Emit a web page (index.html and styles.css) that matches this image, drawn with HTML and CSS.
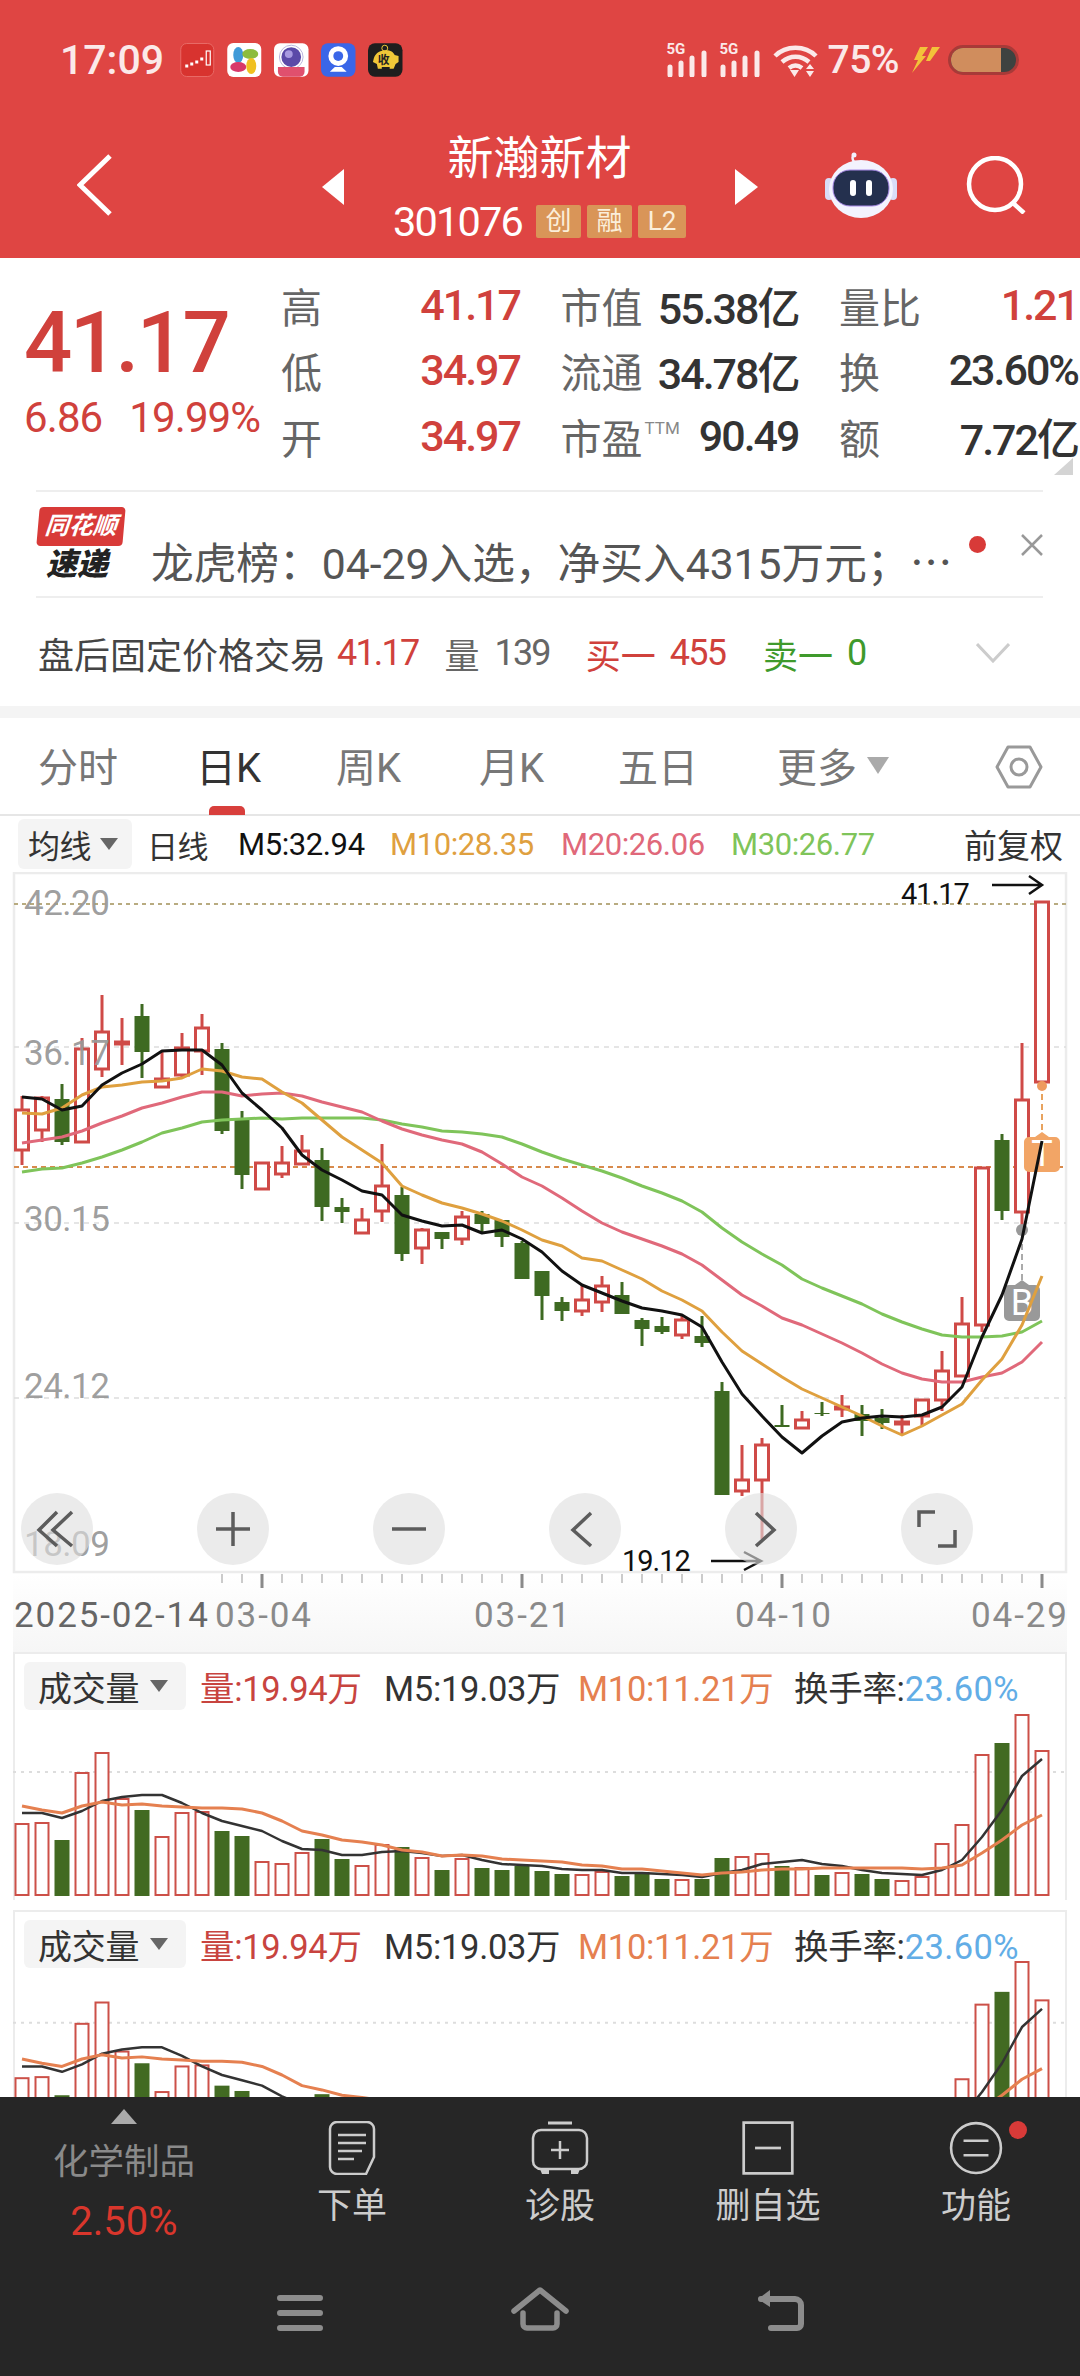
FILE: index.html
```html
<!DOCTYPE html>
<html>
	<head>
		<meta charset="utf-8">
		<title>新瀚新材</title>
		<link rel="stylesheet" href="styles.css">
	</head>
	<body>
		<div class="page">
			<div class="header">
				<div class="status">
					<span class="time">17:09</span>
					<div class="apps">
						<svg viewBox="0 0 34 34"><rect x=".5" y=".5" width="33" height="33" rx="6" fill="#d8332f" stroke="#e86a66"/><path d="M5 23h3M10 21h3M15 19h3M20 16h3" stroke="#fff" stroke-width="3"/><rect x="26" y="8" width="4" height="14" fill="none" stroke="#fff" stroke-width="1.2"/></svg>
						<svg viewBox="0 0 34 34"><rect width="34" height="34" rx="6" fill="#fff"/><ellipse cx="11" cy="12" rx="5" ry="8" fill="#3f9ad8"/><ellipse cx="23" cy="11" rx="8" ry="5" fill="#8cbc3c"/><ellipse cx="11" cy="24" rx="8" ry="5" fill="#d8386a"/><ellipse cx="24" cy="23" rx="5" ry="8" fill="#f0c020"/></svg>
						<svg viewBox="0 0 35 34"><rect width="35" height="34" rx="6" fill="#fff"/><circle cx="17.5" cy="14" r="12" fill="none" stroke="#b9b4dc"/><circle cx="17.5" cy="14" r="10" fill="#5b4aa8"/><circle cx="15" cy="11" r="4" fill="#a89ae0"/><path d="M4 24h27v5a5 5 0 0 1-5 5H9a5 5 0 0 1-5-5z" fill="#e0506e"/></svg>
						<svg viewBox="0 0 35 34"><rect width="35" height="34" rx="7" fill="#3a66e8"/><circle cx="17.5" cy="13" r="10" fill="#fff"/><circle cx="17.5" cy="13" r="5" fill="#3a66e8"/><path d="M14 24h7l5 5H9z" fill="#fff"/></svg>
						<svg viewBox="0 0 35 34"><rect width="35" height="34" rx="7" fill="#1e1e1e"/><path d="M6 15c2-6 7-8 12-8s8 2 9 5l4 1v6l-3 2-2 5h-4v-2h-8v2H10l-1-5-4-2z" fill="#f0c838"/><circle cx="17" cy="5" r="3" fill="none" stroke="#f0c838"/><text x="16" y="21" class="pig-text">收</text></svg>
					</div>
					<div class="status-right">
						<div class="signal"><span>5G</span><svg viewBox="0 0 42 34"><path d="M3 24v8M14 20v12M25 15v17M37 10v22" stroke="#fbe9e9" stroke-width="5" stroke-linecap="round"/></svg></div>
						<div class="signal"><span>5G</span><svg viewBox="0 0 42 34"><path d="M3 24v8M14 20v12M25 15v17M37 10v22" stroke="#fbe9e9" stroke-width="5" stroke-linecap="round"/></svg></div>
						<svg class="wifi" viewBox="0 0 45 34"><path d="M2 13C13 2 32 2 43 13M9 19c8-7 19-7 27 0M16 25c4-3 9-3 13 0" fill="none" stroke="#fbe9e9" stroke-width="4.5"/><path d="M17 27h9l-4.500 7zM33 26l4-5 4 5zM33 28h8l-4 6z" fill="#fbe9e9"/></svg>
						<span class="batt-num">75%</span>
						<svg class="bolt" viewBox="0 0 32 26"><path d="M12 0h8l-6 9h4L4 26l6-13H6zM24 0h8l-10 14h-4z" fill="#f3c23a"/></svg>
						<div class="battery"><div class="battery-fill"></div></div>
					</div>
				</div>
				<div class="nav">
					<div class="nav-left"><svg class="back" viewBox="0 0 35 62"><path d="M33 2 3 31l30 29" fill="none" stroke="#fff" stroke-width="5"/></svg></div>
					<div class="tri-left"></div>
					<div class="nav-title">
						<div class="stock-name">新瀚新材</div>
						<div class="stock-code"><span>301076</span><b>创</b><b>融</b><b class="wide">L2</b></div>
					</div>
					<div class="tri-right"></div>
					<svg class="robot" viewBox="0 0 72 66">
						<path d="M29 10c-2-3-2-6 0-7" fill="none" stroke="#f1f1fd" stroke-width="2.500"/>
						<circle cx="29" cy="3" r="2.500" fill="#f1f1fd"/>
						<rect x="0" y="26" width="8" height="22" rx="4" fill="#d9dcf8"/><rect x="64" y="26" width="8" height="22" rx="4" fill="#d9dcf8"/>
						<ellipse cx="36" cy="37" rx="32" ry="29" fill="#f3f3fe"/>
						<rect x="8" y="18" width="56" height="36" rx="17" fill="#24304e" stroke="#a98ae8" stroke-width="1"/>
						<rect x="25" y="28" width="6" height="16" rx="3" fill="#fff"/><rect x="41" y="28" width="6" height="16" rx="3" fill="#fff"/>
					</svg>
					<svg class="search" viewBox="0 0 60 58"><circle cx="29" cy="28" r="26" fill="none" stroke="#fff" stroke-width="4.500"/><path d="m47 47 11 10" stroke="#fff" stroke-width="4.500"/></svg>
				</div>
			</div>

			<div class="quote">
				<div class="price-box">
					<div class="price">41.17</div>
					<div class="change"><span>6.86</span><span>19.99%</span></div>
				</div>
				<div class="stat-grid">
					<div class="stat"><label>高</label><span class="red">41.17</span></div>
					<div class="stat"><label>市值</label><span>55.38亿</span></div>
					<div class="stat"><label>量比</label><span class="red">1.21</span></div>
					<div class="stat"><label>低</label><span class="red">34.97</span></div>
					<div class="stat"><label>流通</label><span>34.78亿</span></div>
					<div class="stat"><label>换</label><span>23.60%</span></div>
					<div class="stat"><label>开</label><span class="red">34.97</span></div>
					<div class="stat"><label>市盈<sup>TTM</sup></label><span>90.49</span></div>
					<div class="stat"><label>额</label><span>7.72亿</span></div>
				</div>
				<div class="corner"></div>
			</div>
			<div class="news">
				<div class="news-logo">
					<div class="flag">同花顺</div>
					<div class="flag-sub">速递</div>
				</div>
				<div class="news-text">龙虎榜：04-29入选，净买入4315万元；⋯</div>
				<div class="news-dot"></div>
				<svg class="news-close" viewBox="0 0 22 22"><path d="m1 1 20 20M21 1 1 21" stroke="#999" stroke-width="2.500"/></svg>
			</div>
			<div class="after">
				<span class="after-name">盘后固定价格交易</span>
				<span class="red after-digits">41.17</span>
				<span class="after-label">量</span><span class="after-val after-digits">139</span>
				<span class="red after-buy">买一</span><span class="red after-num after-digits">455</span>
				<span class="green after-sell">卖一</span><span class="green after-num after-digits">0</span>
				<svg class="after-arrow" viewBox="0 0 34 20"><path d="m1 1 16 17L33 1" fill="none" stroke="#ccc" stroke-width="3"/></svg>
			</div>
			<div class="gap"></div>

			<div class="tabs">
				<span class="tab t1">分时</span>
				<span class="tab t2 active">日K</span>
				<span class="tab t3">周K</span>
				<span class="tab t4">月K</span>
				<span class="tab t5">五日</span>
				<span class="tab t6">更多<i class="tri-down"></i></span>
				<svg class="hex" viewBox="0 0 48 44"><path d="M13 2h22l11 20-11 20H13L2 22z" fill="none" stroke="#999" stroke-width="3" stroke-linejoin="round"/><circle cx="24" cy="22" r="8" fill="none" stroke="#999" stroke-width="3"/></svg>
			</div>
			<div class="ma-row">
				<div class="chip ma-chip">均线<i class="tri-small"></i></div>
				<span class="ma-day">日线</span>
				<span class="ma5">M5:32.94</span>
				<span class="ma10">M10:28.35</span>
				<span class="ma20">M20:26.06</span>
				<span class="ma30">M30:26.77</span>
				<span class="ma-fq">前复权</span>
			</div>

			<svg class="kline" viewBox="0 872 1080 780" width="1080" height="780">
				<defs><linearGradient id="fade" x1="0" y1="0" x2="0" y2="1"><stop offset="0" stop-color="#fff"/><stop offset="1" stop-color="#f6f6f6"/></linearGradient></defs>
				<rect x="13" y="1574" width="1054" height="78" fill="url(#fade)"/>
				<rect x="14" y="873" width="1052" height="699" fill="#fff" stroke="#ececec" stroke-width="2.500"/>
				<path d="M14 1047h1052M14 1223h1052M14 1398h1052" stroke="#ddd" stroke-width="1.500" stroke-dasharray="5 5"/>
				<path d="M14 904h1052" stroke="#b8ab80" stroke-width="2" stroke-dasharray="4 4"/>
				<path d="M14 1167h1052" stroke="#d88a4c" stroke-width="2" stroke-dasharray="5 4"/>
				<g id="candles"></g>
				<g id="mark-layer">
					<path d="M1042 1084v50" stroke="#e8a35e" stroke-width="2" stroke-dasharray="6 4"/>
					<circle cx="1042" cy="1086" r="5" fill="#ee9a5e"/>
					<path d="M1042 1132l7 5h6a5 5 0 0 1 5 5v25a5 5 0 0 1-5 5h-26a5 5 0 0 1-5-5v-25a5 5 0 0 1 5-5h6z" fill="#f2a566"/>
					<text x="1042" y="1166" class="mark-text">T</text>
					<path d="M1022 1234v48" stroke="#aaa" stroke-width="2" stroke-dasharray="6 4"/>
					<circle cx="1022" cy="1230" r="6" fill="#999"/>
					<path d="M1022 1280l7 5h6a5 5 0 0 1 5 5v26a5 5 0 0 1-5 5h-26a5 5 0 0 1-5-5v-26a5 5 0 0 1 5-5h6z" fill="#999"/>
					<text x="1022" y="1315" class="mark-text">B</text>
				</g>
				<g id="ma-lines"></g>
				<g class="axis-price">
					<text x="24" y="915">42.20</text>
					<text x="24" y="1065">36.17</text>
					<text x="24" y="1231">30.15</text>
					<text x="24" y="1398">24.12</text>
					<text x="24" y="1556">18.09</text>
				</g>
				<text x="901" y="904" class="hl-text">41.17</text>
				<path d="M992 885h50M1029 876l13 9-13 9" fill="none" stroke="#111" stroke-width="2.500"/>
				<text x="622" y="1571" class="hl-text">19.12</text>
				<path d="M711 1561h50M744 1552l17 9-17 9" fill="none" stroke="#111" stroke-width="2.500"/>
				<g class="chart-btn">
					<circle cx="57" cy="1529" r="36"/><circle cx="233" cy="1529" r="36"/><circle cx="409" cy="1529" r="36"/>
					<circle cx="585" cy="1529" r="36"/><circle cx="761" cy="1529" r="36"/><circle cx="937" cy="1529" r="36"/>
					<path d="M57 1512l-18 18 18 16M72 1512l-19 18 19 16M216 1529h34M233 1512v34M392 1529h34M591 1513l-18 17 18 16M756 1513l18 17-18 16M919 1527v-15h16M955 1530v16h-17"/>
				</g>
				<g id="ticks"></g>
				<g class="axis-date">
					<text x="14" y="1627" class="first">2025-02-14</text>
					<text x="215" y="1627">03-04</text>
					<text x="474" y="1627">03-21</text>
					<text x="735" y="1627">04-10</text>
					<text x="971" y="1627">04-29</text>
				</g>
			</svg>

			<div class="vol-panel">
				<div class="vol-head">
					<div class="chip vol-chip">成交量<i class="tri-small"></i></div>
					<span class="v-red">量:19.94万</span>
					<span class="v-m5">M5:19.03万</span>
					<span class="v-m10">M10:11.21万</span>
					<span class="v-rate">换手率:<em>23.60%</em></span>
				</div>
				<svg id="vol1" class="vol-chart" viewBox="13 1712 1054 186" width="1054" height="186"></svg>
			</div>
			<div class="vol-panel second">
				<div class="vol-head">
					<div class="chip vol-chip">成交量<i class="tri-small"></i></div>
					<span class="v-red">量:19.94万</span>
					<span class="v-m5">M5:19.03万</span>
					<span class="v-m10">M10:11.21万</span>
					<span class="v-rate">换手率:<em>23.60%</em></span>
				</div>
				<svg id="vol2" class="vol-chart" viewBox="13 1970 1054 190" width="1054" height="190"></svg>
			</div>
		</div>

		<div class="footer">
			<div class="tools">
				<div class="sector">
					<i class="tri-up"></i>
					<div class="sector-name">化学制品</div>
					<div class="sector-pct">2.50%</div>
				</div>
				<div class="tool">
					<svg viewBox="0 0 48 54"><path d="M9 1h30a7 7 0 0 1 7 7v28l-8 17H9a7 7 0 0 1-7-7V8a7 7 0 0 1 7-7z" fill="none" stroke="#ccc" stroke-width="2.500"/><path d="M10 14h28M10 22h28M10 30h24M10 38h16" stroke="#ccc" stroke-width="2.500"/></svg>
					<span>下单</span>
				</div>
				<div class="tool">
					<svg viewBox="0 0 58 54"><path d="M17 2h24" stroke="#ccc" stroke-width="3"/><rect x="2" y="9" width="54" height="39" rx="8" fill="none" stroke="#ccc" stroke-width="2.500"/><path d="M29 20v18M20 29h18" stroke="#ccc" stroke-width="2.500"/><path d="M9 48h9v5H11zM40 48h9l-2 5h-7z" fill="#ccc"/></svg>
					<span>诊股</span>
				</div>
				<div class="tool">
					<svg viewBox="0 0 48 50"><rect x="1.500" y="1.500" width="45" height="47" fill="none" stroke="#ccc" stroke-width="2.500"/><path d="M12 25h24" stroke="#ccc" stroke-width="2.500"/></svg>
					<span>删自选</span>
				</div>
				<div class="tool tool-dot">
					<svg viewBox="0 0 52 52"><circle cx="26" cy="26" r="24" fill="none" stroke="#ccc" stroke-width="2.500"/><path d="M14 19h24M14 33h24" stroke="#ccc" stroke-width="2.500"/></svg>
					<span>功能</span>
					<i class="red-dot"></i>
				</div>
			</div>
			<div class="sysnav">
				<svg class="nav-menu" viewBox="0 0 46 36"><path d="M3 3h40M3 18h40M3 33h40" stroke="#8c8c8c" stroke-width="6" stroke-linecap="round"/></svg>
				<svg class="nav-home" viewBox="0 0 58 44"><path d="M3 24 29 3l26 21" fill="none" stroke="#8c8c8c" stroke-width="5.500" stroke-linecap="round" stroke-linejoin="round"/><path d="M12 26v11a4 4 0 0 0 4 4h26a4 4 0 0 0 4-4V26" fill="none" stroke="#8c8c8c" stroke-width="5.500" stroke-linecap="round"/></svg>
				<svg class="nav-back" viewBox="0 0 48 42"><path d="M4 10h34a6 6 0 0 1 6 6v19a4 4 0 0 1-4 4H14" fill="none" stroke="#8c8c8c" stroke-width="6" stroke-linecap="round"/><path d="M13 1 1 10l12 8z" fill="#8c8c8c"/></svg>
			</div>
		</div>
		<script src="chart.js"></script>
	</body>
</html>
```
FILE: styles.css
```css
*{
	padding: 0;
	margin: 0;
	box-sizing: border-box;
}
body{
	width: 1080px;
	height: 2376px;
	overflow: hidden;
	background: #fff;
	font-family: Roboto, "Noto Sans CJK SC", sans-serif;
	color: #333;
}
i{
	font-style: normal;
	display: block;
}
.page{
	height: 2097px;
	overflow: hidden;
}
.red{
	color: #d0413c;
}
.green{
	color: #3f9a2c;
}

/* header */
.header{
	height: 258px;
	background: #df4543;
	color: #fff;
	padding-top: 43px;
}
.status{
	display: flex;
	align-items: center;
	height: 34px;
	padding-left: 60px;
}
.time{
	width: 120px;
	font-size: 41px;
	font-weight: 500;
	color: #fbe9e9;
}
.apps{
	display: flex;
	gap: 12.500px;
}
.apps svg{
	width: 34.500px;
	height: 34px;
}
.pig-text{
	font-size: 12px;
	font-weight: 700;
	fill: #222;
	text-anchor: middle;
}
.status-right{
	display: flex;
	align-items: center;
	margin-left: 264px;
}
.signal{
	position: relative;
	width: 42px;
	height: 34px;
	margin-right: 11px;
}
.signal span{
	position: absolute;
	left: 0;
	top: -2px;
	font-size: 15px;
	line-height: 16px;
	font-weight: 700;
	color: #fbe9e9;
}
.signal svg{
	display: block;
	width: 42px;
	height: 34px;
}
.wifi{
	width: 45px;
	height: 34px;
}
.batt-num{
	margin-left: 10px;
	font-size: 39px;
	font-weight: 500;
	letter-spacing: -.5px;
	color: #fbe9e9;
}
.bolt{
	width: 32px;
	height: 26px;
	margin-left: 9px;
}
.battery{
	width: 71px;
	height: 30px;
	margin-left: 8px;
	border: 3px solid #a83a38;
	border-radius: 15px;
	background: #3e4240;
	overflow: hidden;
}
.battery-fill{
	width: 50px;
	height: 100%;
	background: #d08d5d;
}
.nav{
	display: flex;
	align-items: center;
	margin-top: 55px;
}
.nav-left{
	width: 322px;
	padding-left: 77px;
}
.back{
	display: block;
	width: 35px;
	height: 62px;
}
.tri-left{
	width: 0;
	height: 0;
	border-style: solid;
	border-width: 18px 22px 18px 0;
	border-color: transparent #fff transparent transparent;
	margin-top: 4px;
}
.tri-right{
	width: 0;
	height: 0;
	border-style: solid;
	border-width: 18px 0 18px 23px;
	border-color: transparent transparent transparent #fff;
	margin-top: 4px;
}
.nav-title{
	width: 391px;
	text-align: center;
}
.stock-name{
	font-size: 46px;
	line-height: 52px;
}
.stock-code{
	display: flex;
	justify-content: center;
	align-items: center;
	margin-top: 20px;
	height: 34px;
}
.stock-code span{
	font-size: 41.500px;
	letter-spacing: -1.800px;
	margin-right: 14px;
}
.stock-code b{
	width: 45px;
	height: 33px;
	margin-right: 6px;
	border-radius: 2px;
	background: #d99558;
	color: #fbeeda;
	font-size: 26px;
	font-weight: 400;
	line-height: 33px;
}
.stock-code b.wide{
	width: 48px;
	margin-right: 0;
}
.robot{
	width: 72px;
	height: 66px;
	margin-left: 67px;
}
.search{
	width: 60px;
	height: 58px;
	margin-left: 69px;
}

/* quote */
.quote{
	position: relative;
	display: flex;
	height: 232px;
	padding: 14px 0 0 24px;
}
.price-box{
	width: 257px;
	padding-top: 31px;
}
.price{
	font-size: 85px;
	line-height: 80px;
	font-weight: 500;
	letter-spacing: -2.500px;
	color: #d0413c;
}
.change{
	display: flex;
	gap: 27px;
	margin-top: 13px;
	font-size: 42px;
	line-height: 44px;
	letter-spacing: -.9px;
	color: #d0413c;
}
.stat-grid{
	display: grid;
	grid-template-columns: 239px 238px 239px;
	grid-auto-rows: 65.500px;
	column-gap: 40.500px;
}
.stat{
	display: flex;
	justify-content: space-between;
	align-items: center;
	font-size: 43px;
	font-weight: 500;
	letter-spacing: -2px;
	white-space: nowrap;
}
.stat label{
	font-size: 41px;
	font-weight: 400;
	letter-spacing: 0;
	color: #666;
}
.stat sup{
	font-size: 17px;
	margin-left: 2px;
	vertical-align: 20px;
	line-height: 0;
	color: #888;
}
.corner{
	position: absolute;
	right: 7px;
	top: 200px;
	border-style: solid;
	border-width: 0 0 17px 19px;
	border-color: transparent transparent #d4d4d4 transparent;
}
.news{
	position: relative;
	display: flex;
	align-items: center;
	height: 108px;
	margin: 0 37px 0 36px;
	border-top: 2px solid #eee;
	border-bottom: 2px solid #eee;
}
.news-logo{
	width: 115px;
	padding-left: 2px;
}
.flag{
	position: relative;
	width: 86px;
	height: 39px;
	background: #d83a38;
	border-radius: 4px;
	transform: skewX(-5deg);
	color: #fff;
	font-size: 24px;
	font-weight: 700;
	font-style: italic;
	line-height: 38px;
	text-align: center;
	white-space: nowrap;
}
.flag-sub{
	margin-top: 3px;
	padding-left: 8px;
	font-size: 31px;
	line-height: 32px;
	font-weight: 900;
	font-style: italic;
	color: #222;
}
.news-text{
	width: 815px;
	margin-top: 40px;
	font-size: 42.700px;
	line-height: 56px;
	color: #555;
	white-space: nowrap;
}
.news-dot{
	position: absolute;
	left: 933px;
	top: 44px;
	width: 17px;
	height: 17px;
	border-radius: 50%;
	background: #d83a38;
}
.news-close{
	position: absolute;
	left: 985px;
	top: 42px;
	width: 22px;
	height: 22px;
}
.after{
	display: flex;
	align-items: center;
	height: 108px;
	padding: 2px 0 0 38px;
	font-size: 35px;
	white-space: nowrap;
}
.after-name{
	width: 299px;
	font-size: 36px;
	color: #444;
}
.after-digits{
	font-size: 36px;
	letter-spacing: -1.800px;
}
.after-label{
	margin-left: 26px;
	color: #666;
}
.after-val{
	margin-left: 15px;
	color: #666;
}
.after-buy{
	margin-left: 36px;
}
.after-sell{
	margin-left: 38px;
}
.after-num{
	margin-left: 14px;
}
.after-arrow{
	position: relative;
	margin-left: 110px;
	width: 34px;
	height: 20px;
}
.gap{
	height: 12px;
	background: #f4f4f4;
}

/* tabs */
.tabs{
	position: relative;
	display: flex;
	align-items: center;
	height: 98px;
	padding-bottom: 4px;
	border-bottom: 2px solid #e6e6e6;
	font-size: 40px;
	color: #777;
}
.tab{
	position: absolute;
	top: 26px;
	line-height: 50px;
	white-space: nowrap;
}
.t1{ left: 38px; }
.t2{ left: 196px; }
.t3{ left: 336px; }
.t4{ left: 479px; }
.t5{ left: 618px; }
.t6{ left: 777px; }
.active{
	color: #333;
}
.active:after{
	content: "";
	position: absolute;
	left: 13px;
	top: 62px;
	width: 36px;
	height: 9px;
	border-radius: 5px 5px 0 0;
	background: #d83f3c;
}
.tri-down{
	display: inline-block;
	margin-left: 10px;
	vertical-align: 8px;
	border-style: solid;
	border-width: 17px 11px 0;
	border-color: #aaa transparent transparent;
}
.hex{
	position: absolute;
	left: 995px;
	top: 27px;
	width: 48px;
	height: 44px;
}
.ma-row{
	position: relative;
	display: flex;
	align-items: center;
	height: 56px;
	padding-left: 18px;
	font-size: 31px;
	letter-spacing: -.4px;
	white-space: nowrap;
}
.chip{
	display: flex;
	align-items: center;
	background: #f4f4f4;
	border-radius: 6px;
	color: #333;
}
.ma-chip{
	width: 114px;
	height: 50px;
	padding-left: 10px;
	font-size: 32px;
}
.tri-small{
	margin-left: 9px;
	border-style: solid;
	border-width: 12px 9px 0;
	border-color: #666 transparent transparent;
}
.ma-day{
	margin-left: 15px;
	width: 91px;
}
.ma5{
	width: 152px;
	color: #111;
}
.ma10{
	width: 171px;
	color: #dfa03f;
}
.ma20{
	width: 170px;
	color: #e0687a;
}
.ma30{
	width: 233px;
	color: #7fc45a;
}
.ma-fq{
	font-size: 33px;
	letter-spacing: 0;
	color: #333;
}

/* chart */
.kline{
	display: block;
}
.axis-price text{
	font-size: 35px;
	letter-spacing: -.5px;
	fill: #999;
	fill-opacity: .95;
}
.mark-text{
	font-size: 36px;
	fill: #fff;
	text-anchor: middle;
}
.hl-text{
	font-size: 29px;
	fill: #111;
	letter-spacing: -1px;
}
.chart-btn circle{
	fill: #dedede;
	fill-opacity: .62;
}
.chart-btn path{
	fill: none;
	stroke: #5c5c5c;
	stroke-width: 3.500px;
}
.axis-date text{
	font-size: 35px;
	letter-spacing: 1.900px;
	fill: #8a8a8a;
}
.axis-date .first{
	fill: #666;
}
.vol-panel{
	height: 248px;
	margin: 0 13px 10px;
	border-top: 2.500px solid #ececec;
	border-left: 2px solid #ececec;
	border-right: 2px solid #ececec;
}
.vol-panel.second{
	height: 400px;
}
.vol-head{
	display: flex;
	align-items: center;
	height: 56px;
	padding: 8px 0 0 9px;
	font-size: 34.500px;
	letter-spacing: -.3px;
	white-space: nowrap;
}
.vol-chip{
	width: 162px;
	height: 48px;
	padding-left: 14px;
	font-size: 34px;
}
.vol-chip .tri-small{
	margin-left: 11px;
}
.v-red{
	margin-left: 14px;
	width: 184px;
	color: #c8443f;
}
.v-m5{
	width: 194px;
}
.v-m10{
	width: 216px;
	color: #e58050;
}
.v-rate em{
	font-style: normal;
	letter-spacing: .4px;
	color: #62ade6;
}
.vol-chart{
	display: block;
	overflow: visible;
	margin-left: -2px;
}

/* footer */
.footer{
	height: 279px;
	background: #262626;
}
.tools{
	display: grid;
	grid-template-columns: 248px repeat(4, 208px);
	height: 173px;
}
.sector{
	text-align: center;
	padding-top: 12px;
}
.tri-up{
	width: 0;
	margin: 0 auto;
	border-style: solid;
	border-width: 0 13px 15px;
	border-color: transparent transparent #aaa;
}
.sector-name{
	margin-top: 16px;
	font-size: 35.500px;
	line-height: 44px;
	color: #8a8a8a;
}
.sector-pct{
	margin-top: 16px;
	font-size: 40px;
	line-height: 44px;
	color: #d9362c;
}
.tool{
	position: relative;
	display: flex;
	flex-direction: column;
	align-items: center;
	padding-top: 24px;
	font-size: 35px;
	color: #ccc;
}
.tool svg{
	height: 54px;
	width: 58px;
}
.tool span{
	margin-top: 8px;
	line-height: 48px;
}
.red-dot{
	position: absolute;
	left: 137px;
	top: 24px;
	width: 18px;
	height: 18px;
	border-radius: 50%;
	background: #d83a38;
}
.sysnav{
	display: flex;
	align-items: flex-end;
	height: 61px;
	padding-left: 277px;
}
.nav-menu{
	width: 46px;
	height: 36px;
}
.nav-home{
	width: 58px;
	height: 44px;
	margin-left: 188px;
}
.nav-back{
	width: 48px;
	height: 42px;
	margin-left: 188px;
}
```
FILE: chart.js
```js
var NS = 'http://www.w3.org/2000/svg';
var RED = '#cf4a47', GREEN = '#3e6a22';

function mk(tag, attrs, parent){
	var node = document.createElementNS(NS, tag);
	for(var k in attrs){
		node.setAttribute(k, attrs[k]);
	}
	parent.appendChild(node);
	return node;
}
function xOf(i){
	return 22 + 20 * i;
}
function line(ys, color, width, parent, fy){
	var pts = [];
	for(var i = 0; i < ys.length; i++){
		pts.push(xOf(i) + ',' + (fy ? fy(ys[i]) : ys[i]));
	}
	mk('polyline', {points: pts.join(' '), fill: 'none', stroke: color, 'stroke-width': width, 'stroke-linejoin': 'round'}, parent);
}

// r/g, body top, body bottom, wick top, wick bottom
var candles = [
	['r',1110,1150,1096,1165],['r',1098,1130,1096,1142],['g',1099,1142,1084,1145],['r',1049,1142,1038,1142],
	['r',1032,1069,995,1077],['r',1042,1044,1018,1065],['g',1016,1052,1004,1078],['r',1079,1087,1052,1087],
	['r',1048,1075,1033,1078],['r',1028,1051,1014,1075],['g',1049,1131,1043,1134],['g',1120,1175,1111,1189],
	['r',1163,1189,1162,1189],['r',1163,1174,1146,1178],['r',1151,1164,1135,1164],['g',1160,1207,1148,1221],
	['g',1207,1212,1198,1223],['r',1220,1233,1208,1233],['r',1186,1211,1144,1222],['g',1195,1254,1187,1261],
	['r',1230,1248,1228,1264],['g',1232,1239,1232,1249],['r',1217,1239,1211,1245],['g',1214,1224,1211,1233],
	['g',1220,1237,1220,1247],['g',1243,1279,1241,1279],['g',1271,1296,1271,1320],['g',1302,1311,1297,1321],
	['r',1300,1311,1284,1316],['r',1286,1302,1276,1312],['g',1295,1314,1282,1314],['g',1320,1329,1318,1346],
	['g',1326,1332,1317,1334],['r',1320,1335,1316,1339],['g',1336,1343,1316,1347],['g',1391,1495,1382,1495],
	['r',1480,1491,1445,1496],['r',1445,1480,1438,1539],['g',1425,1427,1405,1427],['r',1420,1428,1411,1428],
	['g',1413,1414,1402,1416],['r',1407,1409,1395,1417],['g',1414,1421,1405,1436],['g',1418,1423,1409,1429],
	['r',1422,1424,1415,1434],['r',1400,1416,1400,1425],['r',1371,1400,1351,1411],['r',1324,1376,1297,1376],
	['r',1168,1325,1168,1332],['g',1140,1211,1134,1220],['r',1100,1212,1043,1232],['r',902,1082,902,1082]
];
var m5 = [1097,1099,1110,1106,1085,1073,1064,1051,1050,1050,1065,1093,1110,1128,1155,1170,1180,1191,1195,1215,1221,1226,1225,1233,1230,1239,1252,1271,1285,1293,1301,1308,1311,1315,1327,1362,1394,1416,1437,1453,1436,1422,1418,1416,1417,1415,1407,1387,1337,1295,1239,1141];
var m10 = [1113,1114,1108,1095,1087,1085,1082,1081,1078,1069,1071,1077,1079,1092,1103,1120,1137,1150,1163,1186,1195,1203,1208,1214,1221,1230,1240,1246,1258,1261,1270,1279,1291,1300,1311,1332,1351,1364,1377,1389,1398,1407,1416,1426,1435,1426,1415,1404,1380,1359,1325,1276];
var m20 = [1143,1140,1137,1131,1123,1116,1108,1103,1097,1092,1092,1096,1094,1093,1096,1102,1107,1112,1121,1129,1135,1140,1144,1152,1164,1177,1186,1198,1211,1223,1232,1239,1246,1254,1265,1280,1295,1306,1318,1325,1334,1343,1353,1364,1373,1379,1382,1382,1377,1373,1362,1342];
var m30 = [1172,1169,1168,1163,1157,1150,1142,1133,1128,1122,1120,1119,1118,1119,1118,1118,1118,1118,1120,1124,1127,1131,1132,1134,1137,1144,1152,1159,1165,1171,1178,1186,1193,1201,1212,1228,1242,1254,1265,1279,1288,1296,1304,1314,1322,1329,1335,1337,1337,1336,1332,1321];

// volume bars, top edge in panel one
var vol = [1826,1825,1842,1775,1755,1801,1812,1839,1815,1814,1833,1838,1864,1866,1855,1841,1861,1868,1847,1849,1860,1872,1861,1870,1872,1868,1873,1876,1877,1874,1878,1874,1881,1882,1881,1860,1859,1856,1868,1870,1877,1875,1876,1881,1883,1879,1846,1827,1757,1745,1717,1753];
var volM5 = [1815,1815,1820,1813,1803,1799,1797,1797,1805,1815,1823,1828,1833,1843,1851,1852,1857,1857,1854,1853,1855,1858,1857,1862,1866,1867,1868,1871,1872,1872,1875,1875,1876,1877,1879,1875,1872,1866,1864,1862,1866,1868,1872,1875,1876,1877,1872,1862,1839,1812,1778,1761];
var volM10 = [1808,1812,1815,1808,1804,1807,1806,1808,1809,1810,1810,1811,1815,1823,1833,1837,1842,1844,1847,1852,1854,1858,1857,1858,1861,1862,1863,1864,1867,1868,1871,1871,1873,1875,1877,1875,1874,1872,1871,1871,1870,1870,1870,1870,1870,1871,1870,1867,1855,1842,1827,1817];

var cg = document.getElementById('candles');
for(var i = 0; i < candles.length; i++){
	var c = candles[i], x = xOf(i);
	var color = c[0] === 'r' ? RED : GREEN;
	if(c[3] < c[4]){
		mk('rect', {x: x - 1.5, y: c[3], width: 3, height: c[4] - c[3], fill: color}, cg);
	}
	if(c[0] === 'r'){
		mk('rect', {x: x - 6.5, y: c[1], width: 13, height: Math.max(c[2] - c[1], 1), fill: '#fff', stroke: RED, 'stroke-width': 3}, cg);
	}else{
		mk('rect', {x: x - 7.5, y: c[1], width: 15, height: c[2] - c[1], fill: GREEN}, cg);
	}
}

var lg = document.getElementById('ma-lines');
line(m30, '#7fc45a', 3, lg);
line(m20, '#e0697a', 3, lg);
line(m10, '#dfa03f', 3, lg);
line(m5, '#111', 3, lg);

var tg = document.getElementById('ticks');
for(var t = 10; t < 52; t++){
	var major = t === 12 || t === 25 || t === 38 || t === 51;
	mk('rect', {x: xOf(t) - (major ? 1.5 : 0.75), y: 1574, width: major ? 3 : 1.5, height: major ? 14 : 9, fill: major ? '#8a8a8a' : '#bbb'}, tg);
}

function drawVol(id, base, fy){
	var svg = document.getElementById(id);
	mk('path', {d: 'M13 ' + fy(1774) + 'h1054', stroke: '#ddd', 'stroke-width': 2, 'stroke-dasharray': '3 5'}, svg);
	for(var i = 0; i < vol.length; i++){
		var c = candles[i], x = xOf(i), top = fy(vol[i]);
		if(c[0] === 'r'){
			mk('rect', {x: x - 6.5, y: top, width: 13, height: base - top, fill: '#fff', stroke: '#cc5048', 'stroke-width': 2}, svg);
		}else{
			mk('rect', {x: x - 7.5, y: top, width: 15, height: base - top + 1, fill: '#426a22'}, svg);
		}
	}
	line(volM5, '#333', 2.5, svg, fy);
	line(volM10, '#e58050', 3, svg, fy);
}
drawVol('vol1', 1897, function(y){ return y; });
drawVol('vol2', 2156, function(y){ return y + 247 + (y - 1717) * 0.066; });
```
